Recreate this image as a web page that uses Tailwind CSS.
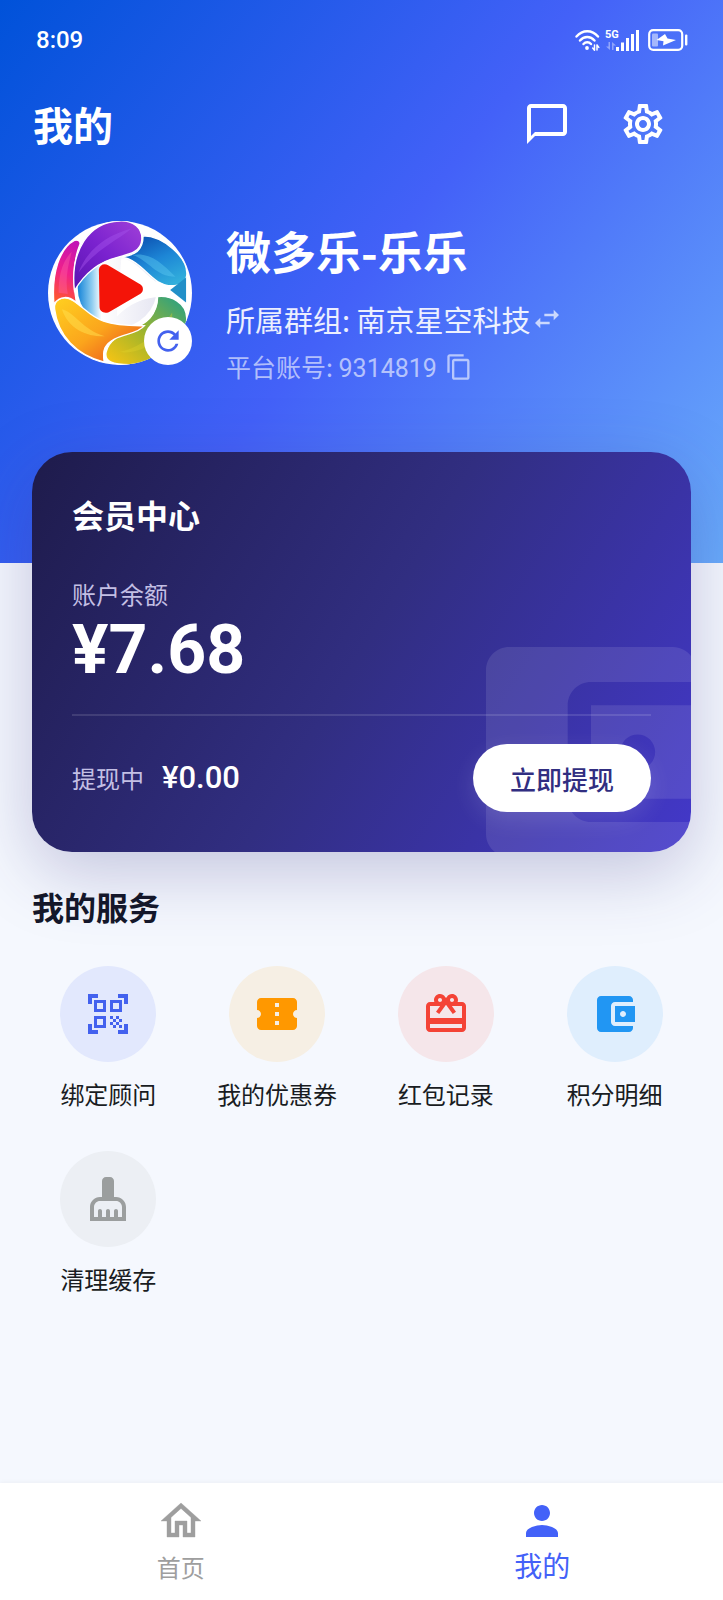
<!DOCTYPE html>
<html lang="zh-CN">
<head>
    <meta charset="UTF-8">
    <meta name="viewport" content="width=device-width, initial-scale=1.0">
    <title>我的</title>
    <script src="https://cdn.jsdelivr.net/npm/@tailwindcss/browser@4"></script>
</head>
<body class="min-h-screen flex flex-col bg-[#f5f8fe] font-['Noto_Sans_CJK_SC',sans-serif] text-[#191c22]">
    <header class="bg-[linear-gradient(128deg,#0052d9_0%,#4361f8_50%,#69abfb_100%)] text-white pt-7 pb-[180px]">
        <!-- Status bar -->
        <div class="flex items-center justify-between pl-9 pr-[35px] h-6">
            <span class="font-['Roboto',sans-serif] text-2xl leading-6 font-medium">8:09</span>
            <div class="flex items-center">
                <svg class="w-[26px] h-[22px]" viewBox="0 0 26 22" fill="none" stroke="currentColor" stroke-width="2.4" stroke-linecap="round">
                    <path d="M1.5 7.5C7.5.5 17 .5 23 7.5M5 11.5c4-4.600 10.500-4.600 14.500 0M8.500 15c2-2.300 5.500-2.300 7.500 0" />
                    <circle cx="12" cy="19" r="1.900" fill="currentColor" stroke="none" />
                    <path d="M19.500 16v5M17.700 19l1.800 2.200M22 21v-5M22 16l1.800 2.400" stroke-width="1.500" />
                </svg>
                <div class="flex flex-col w-[15px] ml-1 h-[22px]">
                    <span class="font-['Roboto',sans-serif] text-[11px] leading-3 font-bold">5G</span>
                    <svg class="w-3 h-[10px] opacity-40" viewBox="0 0 12 10" fill="currentColor">
                        <path d="M3.500 1h1.500v8L1 5.500h2.500zM7 9h1.500V4.500H11L7 1z" />
                    </svg>
                </div>
                <svg class="w-6 h-[22px] -ml-1" viewBox="0 0 24 22" fill="currentColor">
                    <path d="M0 18h3v4H0zM5 13.500h3V22H5zM10 9h3v13h-3zM15 5h3v17h-3zM20 1h3v21h-3z" />
                </svg>
                <svg class="w-10 h-[22px] ml-2" viewBox="0 0 40 22" fill="currentColor">
                    <rect x="1.200" y="1.200" width="33" height="19.600" rx="4" fill="none" stroke="currentColor" stroke-width="2.200" />
                    <rect x="4" y="4.500" width="6" height="13" rx="1" opacity=".5" />
                    <path d="M17 5l-8.500 6 7 1.200-.5 4.300L28 11l-8.500-1.500z" />
                    <rect x="37" y="5.500" width="2.400" height="11" rx="1" />
                </svg>
            </div>
        </div>

        <!-- Page title -->
        <div class="flex items-center justify-between mt-12 pl-[33px] pr-14 h-12">
            <h1 class="text-[40px] leading-[48px] font-bold">我的</h1>
            <div class="flex gap-12">
                <button type="button" aria-label="消息">
                    <svg class="size-12" viewBox="0 0 24 24" fill="currentColor"><path d="M20 2H4c-1.100 0-2 .9-2 2v18l4-4h14c1.100 0 2-.9 2-2V4c0-1.100-.9-2-2-2zm0 14H6l-2 2V4h16v12z" /></svg>
                </button>
                <button type="button" aria-label="设置">
                    <svg class="size-12" viewBox="0 0 24 24" fill="currentColor"><path d="M19.43 12.98c.04-.32.07-.64.07-.98 0-.34-.03-.66-.07-.98l2.11-1.65c.19-.15.24-.42.12-.64l-2-3.46c-.09-.16-.26-.25-.44-.25-.06 0-.12.01-.17.03l-2.49 1c-.52-.4-1.08-.73-1.69-.98l-.38-2.65C14.46 2.18 14.25 2 14 2h-4c-.25 0-.46.18-.49.42l-.38 2.65c-.61.25-1.17.59-1.69.98l-2.49-1c-.06-.02-.12-.03-.18-.03-.17 0-.34.09-.43.25l-2 3.46c-.13.22-.07.49.12.64l2.11 1.65c-.04.32-.07.65-.07.98 0 .33.03.66.07.98l-2.11 1.65c-.19.15-.24.42-.12.64l2 3.46c.09.16.26.25.44.25.06 0 .12-.01.17-.03l2.49-1c.52.4 1.08.73 1.69.98l.38 2.65c.03.24.24.42.49.42h4c.25 0 .46-.18.49-.42l.38-2.65c.61-.25 1.17-.59 1.69-.98l2.49 1c.06.02.12.03.18.03.17 0 .34-.09.43-.25l2-3.46c.12-.22.07-.49-.12-.64l-2.11-1.65zm-1.98-1.71c.04.31.05.52.05.73 0 .21-.02.43-.05.73l-.14 1.13.89.7 1.08.84-.7 1.21-1.27-.51-1.04-.42-.9.68c-.43.32-.84.56-1.25.73l-1.06.43-.16 1.13-.2 1.35h-1.4l-.19-1.35-.16-1.13-1.06-.43c-.43-.18-.83-.41-1.23-.71l-.91-.7-1.06.43-1.27.51-.7-1.21 1.08-.84.89-.7-.14-1.13c-.03-.31-.05-.54-.05-.74s.02-.43.05-.73l.14-1.13-.89-.7-1.08-.84.7-1.21 1.27.51 1.04.42.9-.68c.43-.32.84-.56 1.25-.73l1.06-.43.16-1.13.2-1.35h1.39l.19 1.35.16 1.13 1.06.43c.43.18.83.41 1.23.71l.91.7 1.06-.43 1.27-.51.7 1.21-1.07.85-.89.7.14 1.13zM12 8c-2.21 0-4 1.79-4 4s1.79 4 4 4 4-1.79 4-4-1.79-4-4-4zm0 6c-1.1 0-2-.9-2-2s.9-2 2-2 2 .9 2 2-.9 2-2 2z" /></svg>
                </button>
            </div>
        </div>

        <!-- Profile -->
        <div class="flex items-start gap-[34px] mt-[73px] px-12">
            <div class="relative size-36 shrink-0">
                <svg class="size-36 rounded-full" viewBox="24 33 436 436">
                    <defs>
                        <linearGradient id="purple" x1="0" y1="1" x2="1" y2="0"><stop offset="0" stop-color="#5a14b0" /><stop offset=".5" stop-color="#7a22cf" /><stop offset="1" stop-color="#a040d8" /></linearGradient>
                        <linearGradient id="pink" x1=".5" y1="0" x2=".3" y2="1"><stop offset="0" stop-color="#c414b4" /><stop offset=".5" stop-color="#f0208a" /><stop offset="1" stop-color="#ff5a28" /></linearGradient>
                        <linearGradient id="orange" x1="0" y1="0" x2="1" y2="1"><stop offset="0" stop-color="#ffd020" /><stop offset=".5" stop-color="#fba51c" /><stop offset="1" stop-color="#e8421c" /></linearGradient>
                        <linearGradient id="green" x1="0" y1="1" x2="1" y2="0"><stop offset="0" stop-color="#fdc512" /><stop offset=".45" stop-color="#a3b52a" /><stop offset="1" stop-color="#1f9f8a" /></linearGradient>
                        <linearGradient id="blue" x1=".2" y1="0" x2=".8" y2="1"><stop offset="0" stop-color="#0a4cae" /><stop offset=".5" stop-color="#1d86d6" /><stop offset="1" stop-color="#33b1dc" /></linearGradient>
                        <linearGradient id="inner" x1="0" y1="0" x2="1" y2="0"><stop offset="0" stop-color="#1584d8" /><stop offset=".18" stop-color="#8fcdf0" /><stop offset=".3" stop-color="#fff" /><stop offset="1" stop-color="#e6e6f2" /></linearGradient>
                    </defs>
                    <rect x="24" y="33" width="436" height="436" fill="#fff" />
                    <circle cx="234" cy="236" r="120" fill="url(#inner)" />
                    <!-- Gap that runs from the play sign to the right edge -->
                    <path d="M246 146c50 4 80 70 140 88l56 8-80 20c-50 4-90 20-130 60z" fill="#fff" />
                    <g stroke="#fff" stroke-width="4">
                        <path d="M200 430c14-60 96-62 132-102 18-22 24-40 24-66 40-4 88 18 88 66 0 70-88 140-174 140-50 0-76-10-70-38z" fill="url(#green)" />
                        <path d="M44 300c-4-30 28-44 56-26 60 40 60 78 216 76-24 32-96 22-120 68-6 14-4 28-2 42C110 440 54 380 44 300z" fill="url(#orange)" />
                        <path d="M42 284C34 190 60 115 104 92c12-4 20 4 16 14-22 54-22 110-10 174-24-22-50-20-68 4z" fill="url(#pink)" />
                        <path d="M246 142c40-6 66-18 66-64 60 0 138 66 132 120-4 34-52 40-88 18-36-24-60-66-110-74z" fill="url(#blue)" />
                        <path d="M104 244C90 120 150 36 240 33c44-2 70 22 68 56-2 36-34 44-74 54-50 12-94 40-130 101z" fill="url(#purple)" />
                    </g>
                    <path d="M116 190c24-66 80-112 160-134-30 30-106 60-160 134z" fill="#a552ea" opacity=".45" />
                    <path d="M56 250c0-50 10-94 40-124-14 50-20 90-12 128z" fill="#ff62a8" opacity=".4" />
                    <path d="M66 300c40 10 60 60 130 82-50 2-110-20-130-82z" fill="#ffe04e" opacity=".5" />
                    <path d="M240 430c70-16 120-60 160-120 6 50-70 130-160 120z" fill="#e2d52a" opacity=".35" />
                    <path d="M280 136c50-10 90 24 130 66-60 0-80-50-130-66z" fill="#5cc8f0" opacity=".45" />
                    <path d="M394 242l48-38v76z" fill="#218fc8" />
                    <path d="M178 180c2-14 16-20 28-13l98 58c10 7 10 21 0 28l-96 56c-14 6-28-2-28-16z" fill="#f41408" />
                </svg>
                <button type="button" aria-label="刷新" class="absolute right-0 bottom-0 size-12 rounded-full bg-white text-[#4361ee] flex items-center justify-center">
                    <svg class="size-8" viewBox="0 0 24 24" fill="currentColor"><path d="M17.65 6.35C16.2 4.9 14.21 4 12 4c-4.42 0-7.99 3.58-7.99 8s3.57 8 7.990 8c3.730 0 6.840-2.550 7.730-6h-2.080c-.82 2.330-3.040 4-5.650 4-3.310 0-6-2.690-6-6s2.690-6 6-6c1.660 0 3.140.690 4.220 1.780L13 11h7V4l-2.350 2.350z" /></svg>
                </button>
            </div>
            <div class="pt-0.5">
                <h2 class="text-[45px] leading-[56px] font-bold">微多乐-乐乐</h2>
                <div class="flex items-center mt-5 h-10">
                    <span class="text-[29px] leading-10 text-white/90">所属群组: 南京星空科技</span>
                    <button type="button" aria-label="切换群组" class="text-white/70">
                        <svg class="size-8" viewBox="0 0 24 24" fill="currentColor"><path d="M6.990 11L3 15l3.990 4v-3H14v-2H6.990v-3zM21 9l-3.990-4v3H10v2h7.010v3L21 9z" /></svg>
                    </button>
                </div>
                <div class="flex items-center gap-2 mt-3 h-8 text-white/60">
                    <span class="text-[25px] leading-8">平台账号: <span class="font-['Roboto',sans-serif]">9314819</span></span>
                    <button type="button" aria-label="复制账号">
                        <svg class="size-7" viewBox="0 0 24 24" fill="currentColor"><path d="M16 1H4c-1.100 0-2 .9-2 2v14h2V3h12V1zm3 4H8c-1.100 0-2 .9-2 2v14c0 1.100.9 2 2 2h11c1.100 0 2-.9 2-2V7c0-1.100-.9-2-2-2zm0 16H8V7h11v14z" /></svg>
                    </button>
                </div>
            </div>
        </div>
    </header>

    <main class="flex-1 px-8 pb-10">
        <!-- Member card -->
        <section class="relative -mt-[111px] px-10 pt-[38px] pb-10 rounded-[40px] text-white bg-[linear-gradient(121deg,#1e1b4b_0%,#312e81_50%,#4338ca_100%)] shadow-[0_20px_70px_rgba(49,46,129,0.26)]">
            <div class="absolute inset-0 overflow-hidden rounded-[40px]">
                <svg class="absolute -right-10 -bottom-10 size-[280px] text-white/10" viewBox="0 0 24 24" fill="currentColor"><path d="M21 18v1c0 1.100-.9 2-2 2H5c-1.110 0-2-.9-2-2V5c0-1.100.890-2 2-2h14c1.100 0 2 .9 2 2v1h-9c-1.110 0-2 .9-2 2v8c0 1.100.890 2 2 2h9zm-9-2h10V8H12v8zm4-2.500c-.830 0-1.500-.670-1.500-1.500s.670-1.500 1.500-1.500 1.500.670 1.500 1.500-.670 1.500-1.500 1.500z" /></svg>
            </div>
            <div class="relative">
                <h2 class="text-[32px] leading-[48px] font-bold">会员中心</h2>
                <p class="mt-10 text-2xl leading-8 text-[#c3bfe4]">账户余额</p>
                <p class="mt-1 font-['Roboto',sans-serif] text-[68px] leading-[72px] font-bold">¥7.68</p>
                <div class="mt-7 h-0.5 bg-white/12"></div>
                <div class="flex items-center justify-between mt-7">
                    <div class="flex items-center gap-[18px]">
                        <span class="text-2xl text-[#c3bfe4]">提现中</span>
                        <span class="font-['Roboto',sans-serif] text-[31px] font-medium">¥0.00</span>
                    </div>
                    <button type="button" class="h-[68px] px-[37px] rounded-full bg-white text-[#312e81] text-[26px] font-medium shadow-[0_8px_24px_rgba(255,255,255,0.12)]">立即提现</button>
                </div>
            </div>
        </section>

        <!-- Services -->
        <section class="relative mt-[30px]">
            <h2 class="text-[32px] leading-[48px] font-bold text-[#14172a]">我的服务</h2>
            <div class="grid grid-cols-4 gap-x-4 gap-y-[39px] mt-9">
                <a href="#" class="flex flex-col items-center gap-3.5">
                    <span class="size-24 rounded-full bg-[#e2e8fd] text-[#4361ee] flex items-center justify-center">
                        <svg class="size-12" viewBox="0 0 24 24" fill="currentColor"><path d="M9.5 6.5v3h-3v-3h3M11 5H5v6h6V5zm-1.5 9.5v3h-3v-3h3M11 13H5v6h6v-6zm6.5-6.5v3h-3v-3h3M19 5h-6v6h6V5zm-6 8h1.5v1.5H13V13zm1.5 1.5H16V16h-1.5v-1.5zM16 13h1.5v1.5H16V13zm-3 3h1.5v1.5H13V16zm1.5 1.5H16V19h-1.5v-1.5zM16 16h1.5v1.5H16V16zm1.5-1.5H19V16h-1.5v-1.5zm0 3H19V19h-1.5v-1.5zM22 7h-2V4h-3V2h5v5zm0 15v-5h-2v3h-3v2h5zM2 22h5v-2H4v-3H2v5zM2 2v5h2V4h3V2H2z" /></svg>
                    </span>
                    <span class="text-2xl leading-9">绑定顾问</span>
                </a>
                <a href="#" class="flex flex-col items-center gap-3.5">
                    <span class="size-24 rounded-full bg-[#f6efe4] text-[#ff9800] flex items-center justify-center">
                        <svg class="size-12" viewBox="0 0 24 24" fill="currentColor"><path d="M22 10V6c0-1.110-.9-2-2-2H4c-1.100 0-1.990.890-1.990 2v4c1.100 0 1.990.9 1.990 2s-.890 2-2 2v4c0 1.100.9 2 2 2h16c1.100 0 2-.9 2-2v-4c-1.100 0-2-.9-2-2s.9-2 2-2zm-9 7.500h-2v-2h2v2zm0-4.500h-2v-2h2v2zm0-4.500h-2v-2h2v2z" /></svg>
                    </span>
                    <span class="text-2xl leading-9">我的优惠券</span>
                </a>
                <a href="#" class="flex flex-col items-center gap-3.5">
                    <span class="size-24 rounded-full bg-[#f5e6ea] text-[#f44336] flex items-center justify-center">
                        <svg class="size-12" viewBox="0 0 24 24" fill="currentColor"><path d="M20 6h-2.180c.110-.310.180-.650.180-1 0-1.660-1.340-3-3-3-1.050 0-1.960.540-2.500 1.350l-.5.670-.5-.680C10.960 2.540 10.050 2 9 2 7.340 2 6 3.340 6 5c0 .350.070.690.180 1H4c-1.110 0-1.990.890-1.990 2L2 19c0 1.110.890 2 2 2h16c1.110 0 2-.890 2-2V8c0-1.110-.890-2-2-2zm-5-2c.550 0 1 .450 1 1s-.450 1-1 1-1-.450-1-1 .450-1 1-1zM9 4c.550 0 1 .450 1 1s-.450 1-1 1-1-.450-1-1 .450-1 1-1zm11 15H4v-2h16v2zm0-5H4V8h5.080L7 10.830 8.620 12 11 8.760l1-1.360 1 1.360L15.380 12 17 10.830 14.920 8H20v6z" /></svg>
                    </span>
                    <span class="text-2xl leading-9">红包记录</span>
                </a>
                <a href="#" class="flex flex-col items-center gap-3.5">
                    <span class="size-24 rounded-full bg-[#dfeefd] text-[#2196f3] flex items-center justify-center">
                        <svg class="size-12" viewBox="0 0 24 24" fill="currentColor"><path d="M21 18v1c0 1.100-.9 2-2 2H5c-1.110 0-2-.9-2-2V5c0-1.100.890-2 2-2h14c1.100 0 2 .9 2 2v1h-9c-1.110 0-2 .9-2 2v8c0 1.100.890 2 2 2h9zm-9-2h10V8H12v8zm4-2.500c-.830 0-1.500-.670-1.500-1.500s.670-1.500 1.500-1.500 1.500.670 1.500 1.500-.670 1.500-1.500 1.500z" /></svg>
                    </span>
                    <span class="text-2xl leading-9">积分明细</span>
                </a>
                <a href="#" class="flex flex-col items-center gap-3.5">
                    <span class="size-24 rounded-full bg-[#eceff4] text-[#9b9e9e] flex items-center justify-center">
                        <svg class="size-12" viewBox="0 0 24 24" fill="currentColor"><path d="M16 11h-1V3c0-1.100-.9-2-2-2h-2c-1.100 0-2 .9-2 2v8H8c-2.760 0-5 2.240-5 5v7h18v-7c0-2.760-2.240-5-5-5zm3 10h-2v-3c0-.550-.450-1-1-1s-1 .450-1 1v3h-2v-3c0-.550-.450-1-1-1s-1 .450-1 1v3H9v-3c0-.550-.450-1-1-1s-1 .450-1 1v3H5v-5c0-1.650 1.350-3 3-3h8c1.650 0 3 1.350 3 3v5z" /></svg>
                    </span>
                    <span class="text-2xl leading-9">清理缓存</span>
                </a>
            </div>
        </section>
    </main>

    <!-- Tab bar -->
    <nav class="grid grid-cols-2 bg-white pt-3.5 pb-[13px] shadow-[0_-1px_4px_rgba(0,0,0,0.04)]">
        <a href="#" class="flex flex-col items-center gap-0.5 text-[#9e9e9e]">
            <svg class="size-12" viewBox="0 0 24 24" fill="currentColor" stroke="currentColor" stroke-width=".2"><path d="M12 5.690l5 4.500V18h-2v-6H9v6H7v-7.810l5-4.500M12 3L2 12h3v8h6v-6h2v6h6v-8h3L12 3z" /></svg>
            <span class="text-2xl leading-10">首页</span>
        </a>
        <a href="#" class="flex flex-col items-center gap-0.5 text-[#4361f8]">
            <svg class="size-12" viewBox="0 0 24 24" fill="currentColor"><path d="M12 12c2.210 0 4-1.790 4-4s-1.790-4-4-4-4 1.790-4 4 1.790 4 4 4zm0 2c-2.670 0-8 1.340-8 4v2h16v-2c0-2.660-5.330-4-8-4z" /></svg>
            <span class="text-[28px] leading-9">我的</span>
        </a>
    </nav>
</body>
</html>
